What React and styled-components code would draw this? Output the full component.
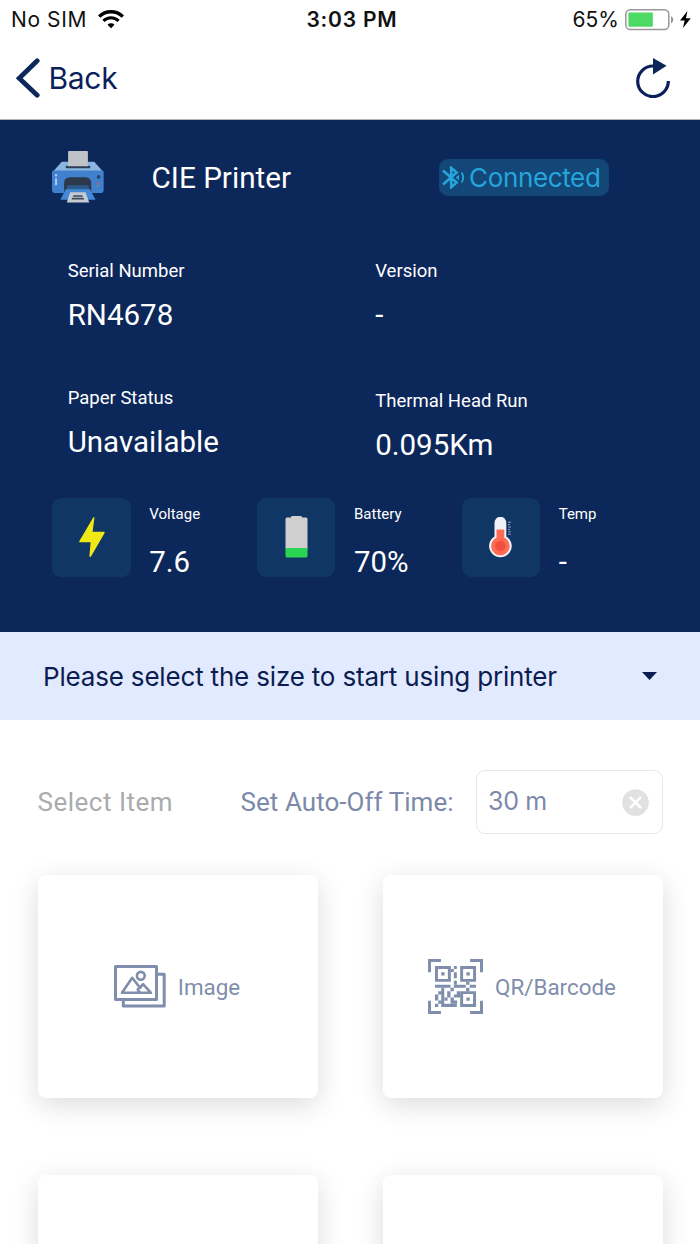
import React, { useState } from 'react';
import styled, { createGlobalStyle } from 'styled-components';

const GlobalStyle = createGlobalStyle`
  * {
    box-sizing: border-box;
  }
  body {
    margin: 0;
    background: #ffffff;
    overflow: hidden;
  }
  svg {
    display: block;
    flex-shrink: 0;
  }
`;

const system = `'Inter', 'Liberation Sans', sans-serif`;

const Screen = styled.div`
  width: 700px;
  height: 1244px;
  overflow: hidden;
  background: #ffffff;
  font-family: 'Roboto', sans-serif;
  white-space: nowrap;
`;

const StatusBar = styled.div`
  display: grid;
  grid-template-columns: 1fr auto 1fr;
  align-items: center;
  height: 39px;
  padding: 0 9px 0 11px;
  font-family: ${system};
  font-size: 21px;
  color: #111111;
`;

const StatusLeft = styled.div`
  display: flex;
  align-items: center;
  gap: 11px;
  letter-spacing: 0.6px;
`;

const StatusRight = styled.div`
  display: flex;
  align-items: center;
  justify-content: flex-end;
  gap: 6px;
`;

const Clock = styled.div`
  font-weight: 600;
  letter-spacing: 0.8px;
  padding-left: 2px;
`;

const NavBar = styled.div`
  display: flex;
  align-items: center;
  justify-content: space-between;
  height: 81px;
  padding: 0 30px 2px 16px;
  border-bottom: 1px solid #b4b5ba;
`;

const BackButton = styled.button`
  display: flex;
  align-items: center;
  gap: 8.5px;
  padding: 0;
  border: none;
  background: none;
  font-family: ${system};
  font-size: 30px;
  letter-spacing: -0.3px;
  color: #0b1f5c;
`;

const Panel = styled.section`
  height: 512px;
  padding-top: 30px;
  background: #0c275a;
  color: #ffffff;
`;

const PrinterRow = styled.div`
  display: flex;
  align-items: center;
  height: 54px;
  padding: 0 91.5px 0 52px;
`;

const PrinterName = styled.h1`
  flex: 1;
  margin: 0 0 0 47.5px;
  font-size: 29.7px;
  font-weight: 400;
`;

const Badge = styled.div`
  display: flex;
  align-items: center;
  width: 170px;
  height: 37px;
  padding-left: 3.5px;
  gap: 4px;
  border-radius: 9px;
  background: #124777;
  color: #26a5dc;
  font-family: ${system};
  font-size: 26px;
  letter-spacing: -0.35px;
`;

const Details = styled.div`
  display: grid;
  grid-template-columns: 307.5px 1fr;
  padding: 55px 0 0 67.7px;
  height: 294px;
`;

const Column = styled.div`
  display: flex;
  flex-direction: column;
  gap: ${(p) => p.$gap}px;
`;

const Label = styled.div`
  font-size: 18.5px;
  line-height: 24px;
`;

const Value = styled.div`
  margin-top: 13px;
  font-size: 29.5px;
  line-height: 38px;
`;

const Metrics = styled.div`
  display: grid;
  grid-template-columns: repeat(3, 204.7px);
  padding-left: 52.3px;
`;

const Metric = styled.div`
  display: flex;
  gap: 18.5px;
`;

const Tile = styled.div`
  display: flex;
  align-items: center;
  justify-content: center;
  width: 78.5px;
  height: 78.5px;
  border-radius: 9px;
  background: #103666;
`;

const MetricLabel = styled.div`
  padding-top: 5px;
  font-size: 15px;
  line-height: 22px;
`;

const MetricValue = styled.div`
  margin-top: 18.5px;
  font-size: 29.4px;
  line-height: 36px;
`;

const SizeSelect = styled.button`
  display: flex;
  align-items: center;
  justify-content: space-between;
  width: 100%;
  height: 88px;
  padding: 0 43px;
  border: none;
  background: #e2eaff;
  color: #0b1c50;
  font-family: ${system};
  font-size: 26px;
  letter-spacing: -0.18px;
`;

const Settings = styled.div`
  display: flex;
  align-items: center;
  height: 64px;
  margin-top: 50px;
  padding: 0 37.5px;
  font-size: 26px;
  color: #7d89a8;
`;

const SelectItem = styled.div`
  width: 203px;
  color: #a9abae;
  letter-spacing: 0.5px;
`;

const AutoOff = styled.div`
  flex: 1;
  letter-spacing: 0.05px;
`;

const TimeField = styled.div`
  display: flex;
  align-items: center;
  justify-content: space-between;
  width: 187px;
  height: 64px;
  padding: 0 13px 0 11.5px;
  border: 1px solid #e7e7e8;
  border-radius: 9px;
  font-family: ${system};
  font-size: 25px;
  letter-spacing: -0.3px;

  span {
    padding-bottom: 3px;
  }
`;

const ItemGrid = styled.div`
  display: grid;
  grid-template-columns: 280px 280px;
  grid-auto-rows: 223px;
  gap: 77px 65px;
  padding: 41px 37.5px 0;
`;

const Item = styled.div`
  display: flex;
  align-items: center;
  justify-content: center;
  gap: 12px;
  padding-right: 1px;
  border-radius: 8px;
  background: #ffffff;
  box-shadow: 0 7px 28px rgba(0, 0, 0, 0.14);
  font-size: 22.4px;
  color: #7f8eac;
`;

const WifiIcon = () => (
  <svg width="26" height="19" viewBox="0 0 26 19" fill="none" stroke="#000">
    <path d="M1.2 6.6a16.8 16.8 0 0 1 23.6 0" strokeWidth="3.4" />
    <path d="M5.4 10.9a10.8 10.8 0 0 1 15.2 0" strokeWidth="3" />
    <path d="M13 18.3l-3.5-3.6a5 5 0 0 1 7 0z" fill="#000" stroke="none" />
  </svg>
);

const PhoneBattery = ({ level }) => (
  <svg width="49" height="22" viewBox="0 0 49 22">
    <rect x="0.8" y="0.8" width="43" height="19.8" rx="4.6" fill="#fff" stroke="#98989a" strokeWidth="1.5" />
    <rect x="3.4" y="3.6" width={(37.6 * level) / 100} height="14.2" rx="0.8" fill="#4cd964" />
    <path d="M46 7.2c3 1.2 3 5.8 0 7z" fill="#98989a" />
  </svg>
);

const ChargeIcon = () => (
  <svg width="11" height="17" viewBox="0 0 11 17">
    <path d="M7.4 0L0 9.4h4.6L3 17l7.8-9.8H6z" fill="#000" />
  </svg>
);

const BackIcon = () => (
  <svg width="24" height="40" viewBox="0 0 24 40" fill="none">
    <path d="M21.2 2.8L3.2 20.2l18 17" stroke="#0c275a" strokeWidth="4.8" strokeLinecap="round" strokeLinejoin="miter" />
  </svg>
);

const ReloadIcon = () => (
  <svg width="34" height="40" viewBox="0 0 34 40">
    <path d="M17 8a15.3 15.3 0 1 0 15.3 15" fill="none" stroke="#0c1f5c" strokeWidth="3.2" />
    <path d="M17 0l13.6 7.8L17 16.4z" fill="#0c275a" />
  </svg>
);

const PrinterIcon = () => (
  <svg width="52" height="51.5" viewBox="66 63 155 153">
    <path d="M95 95h97l27 30H68z" fill="#8ab6e3" />
    <path d="M66 126q0-5 5-5h144q5 0 5 5v52q0 10-10 10H76q-10 0-10-10z" fill="#4080cc" />
    <rect x="107" y="107" width="73" height="7" rx="2" fill="#2c3e57" />
    <path d="M114 64q0-1 2-1h55q2 0 2 1v44h-59z" fill="#bfc3c8" />
    <path d="M102 187v-28q0-18 18-18h45q18 0 18 18v28z" fill="#2b394b" />
    <path d="M112 165h62l4 14h-70z" fill="#2a5b8b" />
    <path d="M107 177h72l17 31H91z" fill="#4388d6" />
    <path d="M120 186h46l11 30h-67z" fill="#c5cad0" />
    <path d="M130 195h26l2 4h-30zM126 202h34l2 5h-38z" fill="#3b4a5c" />
    <rect x="75" y="131" width="6" height="8" rx="2" fill="#a9cdf1" />
    <rect x="75" y="144" width="6" height="21" rx="2" fill="#a9cdf1" />
    <circle cx="205" cy="140" r="5.5" fill="#24476f" />
    <circle cx="202" cy="160" r="3" fill="#d6536d" />
    <circle cx="202" cy="166" r="2.5" fill="#4fae6b" />
  </svg>
);

const BluetoothIcon = () => (
  <svg width="23" height="23" viewBox="0 0 23 23" fill="none" stroke="currentColor">
    <path d="M1 4.6L14.6 16.4l-5.4 4.8V1.800L14.600 6.600 1 18.400" strokeWidth="2.600" />
    <path d="M13.800 11.500l3.200-2.800v5.600z" fill="currentColor" stroke="none" />
    <path d="M19.600 6.600q3.200 4.900 0 9.800" strokeWidth="1.800" />
  </svg>
);

const BoltIcon = () => (
  <svg width="26" height="40" viewBox="0 0 26 40">
    <path d="M14.2.4L.4 24q-.6 1.2.6 1.2h10.6L10.4 39q.4 1.4 1.6.6L25.6 16q.4-1.2-.8-1.2H13.6L15.4 1q0-1.4-1.2-.6z" fill="#f0e814" />
  </svg>
);

const BatteryIcon = () => (
  <svg width="23" height="42" viewBox="0 0 23 42">
    <path d="M6 1.4Q6 0 7.4 0h8.2Q17 0 17 1.4h4Q22.5 1.4 22.5 3v30H.5V3Q.5 1.4 2 1.4z" fill="#cfcfd0" />
    <path d="M.5 32h22v8q0 1.6-1.6 1.6H2.1Q.5 41.6.5 40z" fill="#2bd552" />
  </svg>
);

const ThermometerIcon = () => (
  <svg width="23" height="41" viewBox="0 0 23 41">
    <path d="M5.5 5.7a5.9 5.9 0 0 1 11.8 0v13.7a11.3 11.3 0 1 1-11.8 0z" fill="#eff2f6" />
    <path d="M7.5 12.6h7.8v8.2a9.2 9.2 0 1 1-7.8 0z" fill="#ff6b55" />
    <circle cx="11.4" cy="29" r="5.2" fill="#ef4f3c" />
    <path d="M19 5.2h3M19 7.6h2M19 10h3M19 12.4h2M19 14.8h3M19 17.2h3" stroke="#8ba0b8" strokeWidth="1" />
  </svg>
);

const Caret = () => (
  <svg width="15" height="8" viewBox="0 0 15 8">
    <path d="M0 0h15L7.5 8z" fill="#0b1c50" />
  </svg>
);

const ClearIcon = () => (
  <svg width="27" height="27" viewBox="0 0 27 27">
    <circle cx="13.5" cy="13.5" r="13.3" fill="#e1e1e2" />
    <path d="M8.6 8.6l9.8 9.8M18.4 8.6l-9.8 9.8" stroke="#fff" strokeWidth="2.5" strokeLinecap="round" />
  </svg>
);

const ImageIcon = () => (
  <svg width="52" height="43" viewBox="0 0 52 43" fill="none" stroke="#7f8eac" strokeWidth="3" strokeLinejoin="round">
    <path d="M1.5 1.5h41v33h-41z" />
    <path d="M42.5 9.3h7.7v31.8H9.3v-6.6" />
    <circle cx="26.8" cy="10.8" r="3.9" strokeWidth="2.6" />
    <path d="M8 27.8h29l-8-8.6-3 3.6-7.800-10zM25.700 27.500l-2-3 2.400-2.700" strokeWidth="2.600" />
  </svg>
);

const QrIcon = () => (
  <svg width="55" height="55" viewBox="54 54 166 166" fill="#7f8eac">
    <path d="M54 54h39v9H63v31h-9zM181 54h39v40h-9V63h-30zM54 180h9v31h30v9H54zM211 180h9v40h-39v-9h30z" />
    <path
      fillRule="evenodd"
      d="M75 75h48v48H75zM84 84v30h30V84zM151 75h48v48h-48zM160 84v30h30V84zM151 151h48v48h-48zM160 160v30h30v-30z"
    />
    <path d="M94 94h10v10H94zM170 94h10v10h-10zM170 170h10v10h-10z" />
    {/* timing marks between the two top finders */}
    <path d="M132 75h9v9h-9zM123 84h9v9h-9zM132 94h9v18h-9zM132 120h9v12h-9z" />
    {/* middle band */}
    <path d="M75 132h47v9H75zM132 132h36v9h-36zM180 132h19v9h-19zM169 123h10v9h-10zM169 141h10v10h-10zM122 141h10v10h-10z" />
    {/* lower left block */}
    <path d="M94 141h9v48h38v10H94zM112 151h10v19h-10zM104 170h9v10h-9zM85 151h9v10h-9zM75 161h10v18H75zM85 179h9v10h-9zM75 189h10v10H75z" />
    <path d="M141 151h10v19h-10zM132 161h9v9h-9zM122 170h10v19h-10zM132 179h10v10h-10z" />
  </svg>
);

const details = [
  [
    { label: 'Serial Number', value: 'RN4678' },
    { label: 'Paper Status', value: 'Unavailable' },
  ],
  [
    { label: 'Version', value: '-' },
    { label: 'Thermal Head Run', value: '0.095Km' },
  ],
];

const metrics = [
  { label: 'Voltage', value: '7.6', icon: <BoltIcon /> },
  { label: 'Battery', value: '70%', icon: <BatteryIcon /> },
  { label: 'Temp', value: '-', icon: <ThermometerIcon /> },
];

const App = () => {
  const [autoOff, setAutoOff] = useState('30 m');

  return (
    <Screen>
      <GlobalStyle />
      <StatusBar>
        <StatusLeft>
          No SIM
          <WifiIcon />
        </StatusLeft>
        <Clock>3:03 PM</Clock>
        <StatusRight>
          65%
          <PhoneBattery level={65} />
          <ChargeIcon />
        </StatusRight>
      </StatusBar>
      <NavBar>
        <BackButton>
          <BackIcon />
          Back
        </BackButton>
        <ReloadIcon />
      </NavBar>
      <Panel>
        <PrinterRow>
          <PrinterIcon />
          <PrinterName>CIE Printer</PrinterName>
          <Badge>
            <BluetoothIcon />
            Connected
          </Badge>
        </PrinterRow>
        <Details>
          {details.map((column, index) => (
            <Column key={index} $gap={index === 0 ? 51.5 : 55.4}>
              {column.map((item) => (
                <div key={item.label}>
                  <Label>{item.label}</Label>
                  <Value>{item.value}</Value>
                </div>
              ))}
            </Column>
          ))}
        </Details>
        <Metrics>
          {metrics.map((metric) => (
            <Metric key={metric.label}>
              <Tile>{metric.icon}</Tile>
              <div>
                <MetricLabel>{metric.label}</MetricLabel>
                <MetricValue>{metric.value}</MetricValue>
              </div>
            </Metric>
          ))}
        </Metrics>
      </Panel>
      <SizeSelect>
        Please select the size to start using printer
        <Caret />
      </SizeSelect>
      <Settings>
        <SelectItem>Select Item</SelectItem>
        <AutoOff>Set Auto-Off Time:</AutoOff>
        <TimeField onClick={() => setAutoOff('')}>
          <span>{autoOff}</span>
          <ClearIcon />
        </TimeField>
      </Settings>
      <ItemGrid>
        <Item>
          <ImageIcon />
          Image
        </Item>
        <Item>
          <QrIcon />
          QR/Barcode
        </Item>
        <Item />
        <Item />
      </ItemGrid>
    </Screen>
  );
};

export default App;
